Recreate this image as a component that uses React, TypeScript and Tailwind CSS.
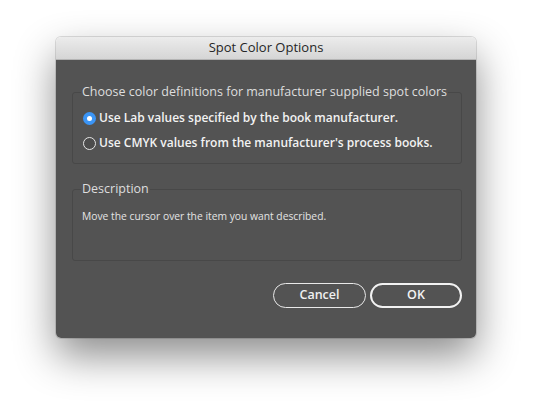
import React from "react";

function Radio({ checked }: { checked: boolean }) {
  return checked ? (
    <span className="flex h-[13px] w-[13px] shrink-0 items-center justify-center rounded-full bg-[#3b95f6]">
      <span className="h-[5px] w-[5px] rounded-full bg-white" />
    </span>
  ) : (
    <span className="h-[13px] w-[13px] shrink-0 rounded-full border border-[#e6e6e6] bg-[#4c4c4c]" />
  );
}

export default function App() {
  const font = { fontFamily: '"Open Sans", "Noto Sans", sans-serif' };
  return (
    <div className="h-[412px] w-[533px] bg-white pl-[56px] pt-[37px]" style={font}>
      <div className="flex h-[301px] w-[420px] flex-col overflow-hidden rounded-[5px] shadow-[0_18px_40px_rgba(0,0,0,0.45),0_0_0_1px_rgba(0,0,0,0.12)]">
        <div className="flex h-[23px] items-center justify-center border-b border-[#b4b4b4] bg-gradient-to-b from-[#ececec] to-[#d5d5d5] text-[13px] text-[#262626]">
          Spot Color Options
        </div>
        <div className="flex flex-1 flex-col bg-[#535353] pl-[16px] pr-[14px] pt-[24px]">
          <fieldset className="h-[80px] rounded-[3px] border border-[#484848]">
            <legend className="ml-[8px] whitespace-nowrap px-[1px] text-[12.5px] leading-[16px] text-[#dedede]">
              Choose color definitions for manufacturer supplied spot colors
            </legend>
            <div className="flex flex-col gap-[9px] whitespace-nowrap pl-[10px] pt-[10px] text-[12px] font-semibold text-[#f2f2f2]">
              <label className="flex h-[16px] items-center gap-[3px]">
                <Radio checked />
                <span>Use Lab values specified by the book manufacturer.</span>
              </label>
              <label className="flex h-[16px] items-center gap-[3px]">
                <Radio checked={false} />
                <span>Use CMYK values from the manufacturer's process books.</span>
              </label>
            </div>
          </fieldset>
          <fieldset className="mt-[17px] h-[80px] rounded-[3px] border border-[#484848]">
            <legend className="ml-[8px] px-[1px] text-[12.5px] leading-[16px] text-[#dedede]">
              Description
            </legend>
            <div className="whitespace-nowrap pl-[9px] pt-[12px] text-[10.3px] text-[#e4e4e4]">
              Move the cursor over the item you want described.
            </div>
          </fieldset>
          <div className="mt-[22px] flex justify-end gap-[4px]">
            <button className="h-[25px] w-[93px] rounded-full border-[1.5px] border-[#e8e8e8] text-[12.5px] font-semibold text-[#f0f0f0]">
              Cancel
            </button>
            <button className="h-[25px] w-[92px] rounded-full border-2 border-[#f2f2f2] text-[12.5px] font-semibold text-[#f4f4f4]">
              OK
            </button>
          </div>
        </div>
      </div>
    </div>
  );
}
